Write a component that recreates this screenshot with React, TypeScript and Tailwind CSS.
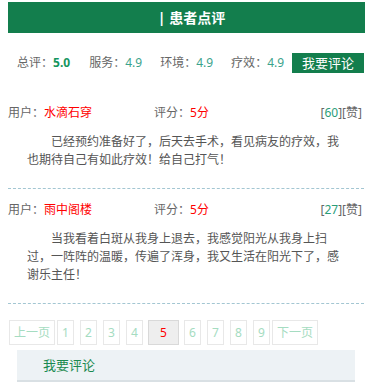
import React from 'react';

const font = "font-['Noto_Sans','Noto_Sans_CJK_SC',sans-serif]";

const reviews = [
  {
    user: '水滴石穿',
    score: '5分',
    likes: 60,
    text: '已经预约准备好了，后天去手术，看见病友的疗效，我也期待自己有如此疗效！给自己打气！',
    top: 'pt-[30px]',
  },
  {
    user: '雨中阁楼',
    score: '5分',
    likes: 27,
    text: '当我看着白斑从我身上退去，我感觉阳光从我身上扫过，一阵阵的温暖，传遍了浑身，我又生活在阳光下了，感谢乐主任！',
    top: 'pt-[11px]',
  },
];

const pages = [
  { label: '上一页', cls: 'ml-[1px] w-[46px]' },
  { label: '1', cls: 'ml-[2px] w-[17px]' },
  { label: '2', cls: 'ml-[6px] w-[17px]' },
  { label: '3', cls: 'ml-[6px] w-[17px]' },
  { label: '4', cls: 'ml-[6px] w-[17px]' },
  { label: '5', cls: 'ml-[5px] w-[31px]', current: true },
  { label: '6', cls: 'ml-[5px] w-[17px]' },
  { label: '7', cls: 'ml-[6px] w-[17px]' },
  { label: '8', cls: 'ml-[6px] w-[17px]' },
  { label: '9', cls: 'ml-[6px] w-[17px]' },
  { label: '下一页', cls: 'ml-[2px] w-[46px]' },
];

function Stat({ label, value, bold, cls }: { label: string; value: string; bold?: boolean; cls?: string }) {
  return (
    <span className={`text-[12px] text-[#666] ${cls ?? ''}`}>
      {label}：
      <span className={bold ? 'font-bold text-[#14955e]' : 'text-[#3ba38c]'}>{value}</span>
    </span>
  );
}

export default function App() {
  return (
    <div className={`w-[372px] h-[388px] bg-white overflow-hidden ${font}`}>
      {/* title bar */}
      <div className="mx-[8px] mt-[2px] w-[357px] h-[31px] bg-[#137e4d] flex items-center justify-center pl-[10px] text-white text-[14px] font-bold leading-none">
        | 患者点评
      </div>

      {/* scores */}
      <div className="mx-[8px] mt-[20px] h-[20px] flex items-center pl-[9px] leading-none">
        <Stat label="总评" value="5.0" bold />
        <Stat label="服务" value="4.9" cls="ml-[19px]" />
        <Stat label="环境" value="4.9" cls="ml-[18px]" />
        <Stat label="疗效" value="4.9" cls="ml-[18px]" />
        <button className="ml-auto w-[72px] h-[20px] bg-[#137e4d] text-white text-[13px] leading-none">
          我要评论
        </button>
      </div>

      {/* reviews */}
      {reviews.map((r) => (
        <div key={r.user} className={`mx-[8px] ${r.top} pb-[19px] border-b border-dashed border-[#a3c6d2]`}>
          <div className="h-[20px] flex items-center text-[12px] text-[#666] leading-none pr-[2px]">
            <span className="w-[146px]">
              用户：<span className="text-[#ff0000]">{r.user}</span>
            </span>
            <span>
              评分：<span className="text-[#ff0000]">{r.score}</span>
            </span>
            <span className="ml-auto">
              [<span className="text-[#2a9d78]">{r.likes}</span>][赞]
            </span>
          </div>
          <p className="mt-[10px] pl-[19px] pr-[19px] text-[12px] leading-[18px] text-[#555] indent-[2em]">
            {r.text}
          </p>
        </div>
      ))}

      {/* pagination */}
      <div className="mx-[8px] mt-[16px] flex h-[25px]">
        {pages.map((p) => (
          <span
            key={p.label}
            className={`${p.cls} h-[25px] flex items-center justify-center text-[12px] leading-none border ${
              p.current ? 'bg-[#eeeeee] border-[#d9d9d9] text-[#ff0000]' : 'border-[#e8e8e8] text-[#a5dcc1]'
            }`}
          >
            {p.label}
          </span>
        ))}
      </div>

      {/* write review */}
      <div className="ml-[17px] mt-[5px] w-[338px] h-[32px] bg-[#edf2f5] border-b-2 border-[#d9e0e4] flex items-center pl-[26px] text-[13px] text-[#1a8a50] leading-none">
        我要评论
      </div>
    </div>
  );
}
